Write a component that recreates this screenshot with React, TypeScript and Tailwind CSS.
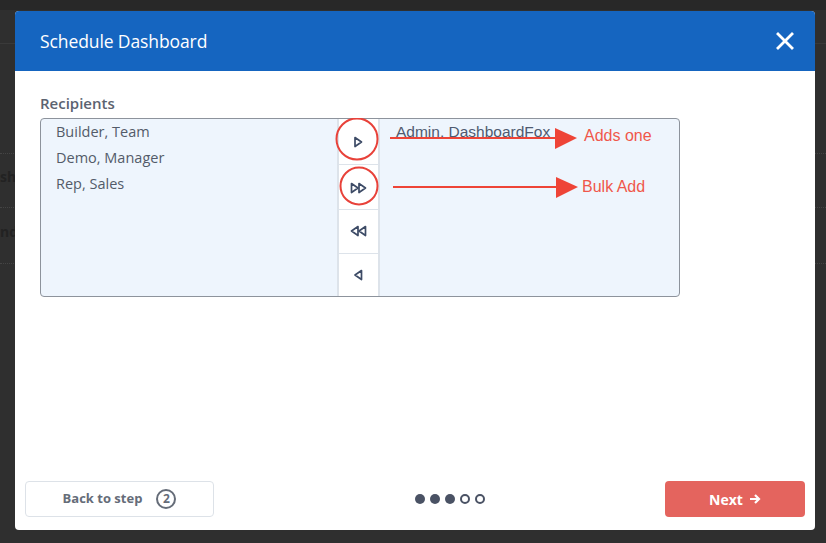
const TriangleIcon = ({ dir, double }: { dir: "left" | "right"; double?: boolean }) => {
  // small outlined play triangles used in the transfer buttons
  const one = (x: number) =>
    dir === "right"
      ? `M${x} 1.5 L${x + 6.5} 6 L${x} 10.5 Z`
      : `M${x + 6.5} 1.5 L${x} 6 L${x + 6.5} 10.5 Z`;
  return (
    <svg width={double ? 17 : 11} height="12" viewBox={double ? "0 0 17 12" : "0 0 11 12"}>
      <path d={one(double ? 1.5 : 2)} fill="none" stroke="#3d4b66" strokeWidth="1.7" strokeLinejoin="round" />
      {double && <path d={one(9)} fill="none" stroke="#3d4b66" strokeWidth="1.7" strokeLinejoin="round" />}
    </svg>
  );
};

const available = ["Builder, Team", "Demo, Manager", "Rep, Sales"];
const selected = ["Admin, DashboardFox"];

export default function App() {
  return (
    <div
      className="relative w-[826px] h-[543px] overflow-hidden bg-[#2f2f2f]"
      style={{ fontFamily: '"Open Sans", "Liberation Sans", sans-serif' }}
    >
      {/* page behind the overlay */}
      <div className="absolute inset-x-0 top-0 h-[10px] bg-[#282828]" />
      <div className="absolute inset-x-0 top-[43px] h-px bg-[#3a3a3a]" />
      <div className="absolute inset-x-0 top-[153px] border-t border-dotted border-[#444]" />
      <div className="absolute inset-x-0 top-[207px] border-t border-dotted border-[#444]" />
      <div className="absolute inset-x-0 top-[263px] border-t border-dotted border-[#444]" />
      <div className="absolute left-0 top-[166px] text-[14px] font-bold text-[#222]">sh</div>
      <div className="absolute left-0 top-[221px] text-[14px] font-bold text-[#222]">nd</div>

      {/* modal */}
      <div className="relative ml-[15px] mt-[11px] w-[800px] h-[519px] rounded-[4px] bg-white flex flex-col overflow-hidden">
        <div className="h-[60px] bg-[#1565c0] flex items-center justify-between pl-[25px] pr-[21px]">
          <span className="text-[17.5px] text-white tracking-[-0.1px]">Schedule Dashboard</span>
          <svg width="18" height="18" viewBox="0 0 18 18">
            <path d="M2 2 L16 16 M16 2 L2 16" stroke="white" strokeWidth="2.8" strokeLinecap="square" />
          </svg>
        </div>

        <div className="flex-1 px-[25px] pt-[22px]">
          <div className="text-[15px] leading-[20px] font-semibold text-[#5c6370] mb-[5px]">Recipients</div>

          <div className="relative w-[640px] h-[179px] flex rounded-[4px] border border-[#8d939c] bg-[#eef5fd]">
            <div className="w-[296px] pl-[15px] text-[14.5px] leading-[26px] text-[#535b69]">
              {available.map((name) => (
                <div key={name}>{name}</div>
              ))}
            </div>

            <div className="w-[43px] bg-[#dde3ea] px-[2px] flex flex-col gap-[1px]">
              <div className="flex-1 bg-white flex items-center justify-center pt-[2px]">
                <TriangleIcon dir="right" />
              </div>
              <div className="flex-1 bg-white flex items-center justify-center pt-[2px]">
                <TriangleIcon dir="right" double />
              </div>
              <div className="flex-1 bg-white flex items-center justify-center">
                <TriangleIcon dir="left" double />
              </div>
              <div className="flex-1 bg-white flex items-center justify-center">
                <TriangleIcon dir="left" />
              </div>
            </div>

            <div
              className="flex-1 pl-[16px] text-[15.5px] leading-[26px] text-[#4f5a70]"
              style={{ fontFamily: '"Liberation Sans", Arial, sans-serif' }}
            >
              {selected.map((name) => (
                <div key={name}>{name}</div>
              ))}
            </div>

            {/* red annotations drawn over the list */}
            <svg className="absolute left-[-1px] top-[-1px] pointer-events-none" width="560" height="120" viewBox="0 0 560 120">
              <circle cx="317" cy="21" r="20.5" fill="none" stroke="#e8423a" strokeWidth="2" />
              <circle cx="319" cy="68" r="18.5" fill="none" stroke="#e8423a" strokeWidth="2" />
              <line x1="350" y1="20" x2="517" y2="20" stroke="#ee4437" strokeWidth="2" />
              <polygon points="515,10 537,20 515,31" fill="#ee4437" />
              <line x1="353" y1="69" x2="518" y2="69" stroke="#ee4437" strokeWidth="2" />
              <polygon points="516,59 538,69 516,80" fill="#ee4437" />
            </svg>
            <span
              className="absolute left-[543px] top-[7px] text-[16px] leading-[20px] text-[#f0574b]"
              style={{ fontFamily: '"Liberation Sans", Arial, sans-serif' }}
            >
              Adds one
            </span>
            <span
              className="absolute left-[541px] top-[58px] text-[16px] leading-[20px] text-[#f0574b]"
              style={{ fontFamily: '"Liberation Sans", Arial, sans-serif' }}
            >
              Bulk Add
            </span>
          </div>
        </div>

        <div className="flex items-center px-[10px] pb-[13px]">
          <button className="w-[189px] h-[36px] rounded-[4px] border border-[#dde2e8] bg-white flex items-center justify-center gap-[14px] text-[13px] font-bold text-[#656c78]">
            <span>Back to step</span>
            <span className="w-[20px] h-[20px] rounded-full border-2 border-[#656c78] flex items-center justify-center text-[12px] leading-none">
              2
            </span>
          </button>

          <div className="flex-1 flex justify-center gap-[5px] pl-[20px]">
            <span className="w-[10px] h-[10px] rounded-full bg-[#4a5264]" />
            <span className="w-[10px] h-[10px] rounded-full bg-[#4a5264]" />
            <span className="w-[10px] h-[10px] rounded-full bg-[#4a5264]" />
            <span className="w-[10px] h-[10px] rounded-full border-2 border-[#4a5264]" />
            <span className="w-[10px] h-[10px] rounded-full border-2 border-[#4a5264]" />
          </div>

          <button className="w-[140px] h-[36px] rounded-[4px] bg-[#e4645e] flex items-center justify-center gap-[6px] text-[14px] font-bold text-white">
            <span>Next</span>
            <svg width="12" height="12" viewBox="0 0 12 12">
              <path d="M1 6 H10 M6 2 L10 6 L6 10" fill="none" stroke="white" strokeWidth="2.2" />
            </svg>
          </button>
        </div>
      </div>
    </div>
  );
}
